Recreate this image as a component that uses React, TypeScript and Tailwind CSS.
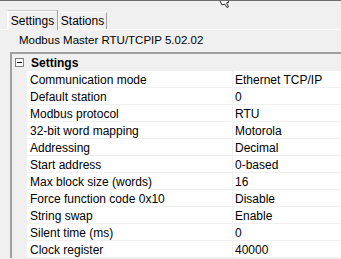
import React from "react";

interface Prop {
  label: string;
  value: string;
}

const props: Prop[] = [
  { label: "Communication mode", value: "Ethernet TCP/IP" },
  { label: "Default station", value: "0" },
  { label: "Modbus protocol", value: "RTU" },
  { label: "32-bit word mapping", value: "Motorola" },
  { label: "Addressing", value: "Decimal" },
  { label: "Start address", value: "0-based" },
  { label: "Max block size (words)", value: "16" },
  { label: "Force function code 0x10", value: "Disable" },
  { label: "String swap", value: "Enable" },
  { label: "Silent time (ms)", value: "0" },
  { label: "Clock register", value: "40000" },
];

const CursorTail = () => (
  <svg
    className="absolute left-[216px] top-0"
    width="14"
    height="7"
    viewBox="0 0 14 7"
  >
    <path d="M2.5 -3 L6 4 L8.5 3 L11 6.5 L12.5 5.8 L10.5 2 L13 1 L9 -3 Z" fill="#fff" stroke="#222" strokeWidth="1" />
  </svg>
);

const MinusBox = () => (
  <div className="w-[9px] h-[9px] border border-[#808080] bg-white flex items-center justify-center">
    <div className="w-[5px] h-px bg-black" />
  </div>
);

export default function App() {
  return (
    <div
      className="relative w-[341px] h-[259px] overflow-hidden bg-[#f0f0f0] border-t border-[#6e6e6e] text-[12px] text-black"
      style={{ fontFamily: '"Liberation Sans", Arial, sans-serif' }}
    >
      <CursorTail />
      {/* tabs */}
      <div className="flex items-end h-[28px] pl-[7px]">
        <div className="h-[20px] w-[51px] border border-b-0 border-[#a0a0a0] bg-[#f0f0f0] flex items-center justify-center relative z-10 -mb-px border-t-[#c8c8c8] border-l-white shadow-[inset_1px_1px_0_#fff]">
          Settings
        </div>
        <div className="h-[17px] w-[49px] border border-b-0 border-[#a0a0a0] border-l-white border-t-white bg-[#f0f0f0] flex items-center justify-center">
          Stations
        </div>
      </div>
      <div className="border-t border-white h-[23px] pl-[19px] flex items-center text-[11.5px]">
        Modbus Master RTU/TCPIP 5.02.02
      </div>
      {/* property grid */}
      <div className="ml-[10px] border-t-2 border-l-2 border-t-[#a0a0a0] border-l-[#a0a0a0] shadow-[inset_1px_1px_0_#696969]">
        <div className="h-[17px] flex items-center bg-[#f0f0f0] pl-[3px]">
          <MinusBox />
          <span className="ml-[7px] font-bold">Settings</span>
        </div>
        {props.map((p) => (
          <div key={p.label} className="flex h-[17px] pl-[15px] bg-[#f0f0f0]">
            <div className="w-[206px] bg-white border-b border-r border-[#f0f0f0] pl-[3px] pt-px flex items-center whitespace-nowrap">
              {p.label}
            </div>
            <div className="flex-1 bg-white border-b border-[#f0f0f0] pl-[2px] pt-px flex items-center whitespace-nowrap">
              {p.value}
            </div>
          </div>
        ))}
      </div>
    </div>
  );
}
